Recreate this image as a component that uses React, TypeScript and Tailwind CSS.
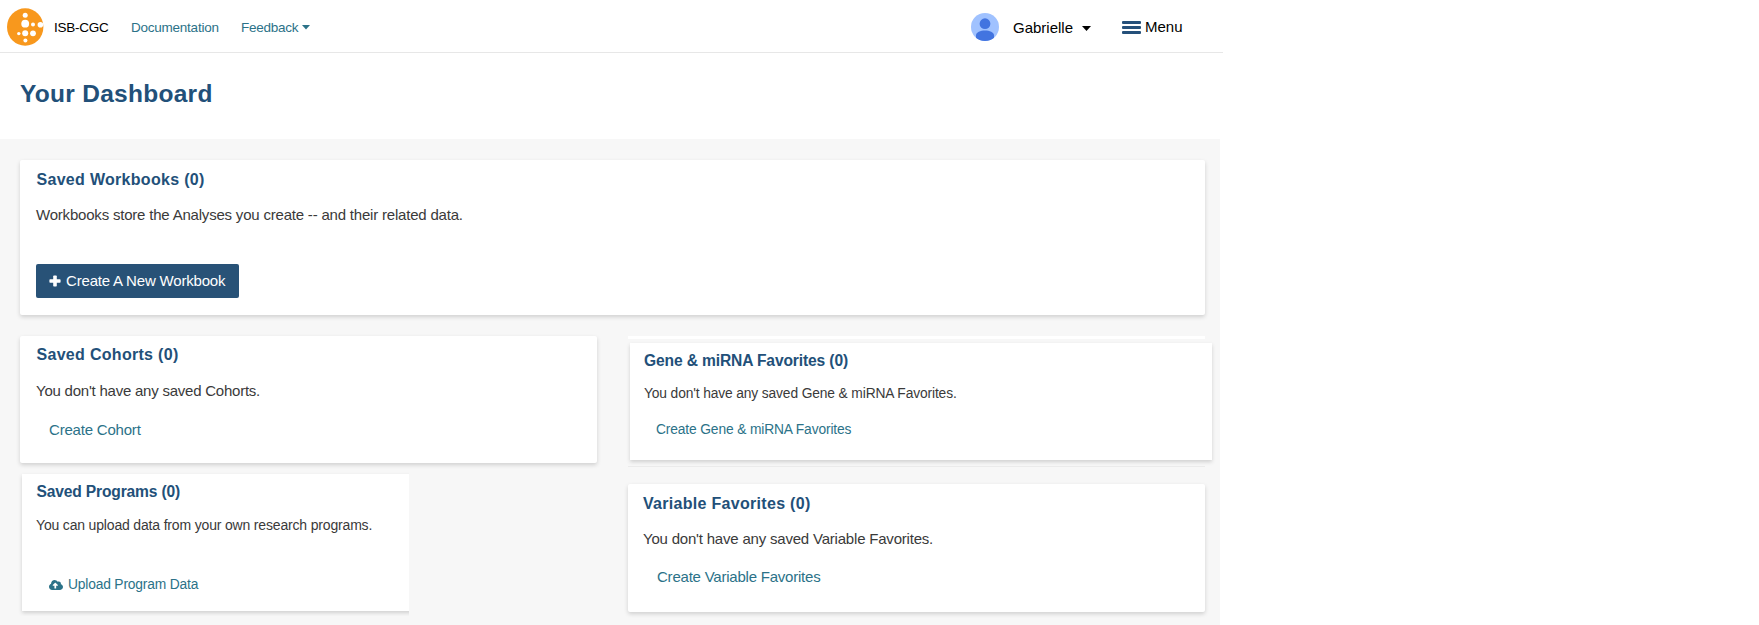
import React from "react";
import { FaCloudUploadAlt } from "react-icons/fa";

function Logo() {
  return (
    <svg className="mt-[2px] ml-[7px] h-[38px] w-[37px] shrink-0" viewBox="0 0 37 38">
      <ellipse cx="18.2" cy="19" rx="18.2" ry="18.8" fill="#f8981d" />
      <g fill="#fff">
        <circle cx="18.2" cy="7.2" r="2.5" />
        <circle cx="18.2" cy="15.7" r="3.9" />
        <circle cx="26" cy="16.5" r="2" />
        <circle cx="33.4" cy="16.7" r="2.8" />
        <circle cx="11.8" cy="25.6" r="1.7" />
        <circle cx="18.2" cy="25.3" r="3" />
        <circle cx="26" cy="25.3" r="2.9" />
        <circle cx="18.4" cy="32.5" r="2" />
      </g>
    </svg>
  );
}

function Avatar() {
  return (
    <svg className="h-7 w-7 shrink-0" viewBox="0 0 28 28">
      <defs>
        <clipPath id="avatar-clip">
          <circle cx="14" cy="14" r="14" />
        </clipPath>
      </defs>
      <g clipPath="url(#avatar-clip)">
        <rect width="28" height="28" fill="#a0c2ff" />
        <circle cx="14" cy="10.7" r="5.4" fill="#4274e0" />
        <path d="M5 22.5c0-3 4.5-4.9 9-4.9s9 1.9 9 4.9V28H5z" fill="#4274e0" />
      </g>
    </svg>
  );
}

function Header() {
  return (
    <header className="flex h-[53px] w-[1223px] items-center border-b border-[#e7e7e7] text-[13.5px] leading-5 tracking-[-0.24px]">
      <Logo />
      <span className="mt-[3px] ml-[10px] w-[77px] text-black">ISB-CGC</span>
      <a className="mt-[3px] w-[110px] text-[#2b7288]">Documentation</a>
      <a className="mt-[3px] flex items-center text-[#2b7288]">
        Feedback
        <svg className="ml-[4px] h-[5px] w-[8px]" viewBox="0 0 8 5">
          <path d="M0 0h8L4 4.5z" fill="currentColor" />
        </svg>
      </a>
      <div className="mt-[2px] ml-auto flex w-[252px] items-center text-[15px] tracking-normal text-black">
        <Avatar />
        <span className="mt-[2px] ml-[14px]">Gabrielle</span>
        <svg className="mt-[2px] ml-[9px] h-[5px] w-[9px]" viewBox="0 0 9 5">
          <path d="M0 0h9L4.5 5z" fill="currentColor" />
        </svg>
        <span className="ml-[31px] flex w-[19px] flex-col gap-[2px]">
          <span className="h-[3px] rounded-[1px] bg-[#25507a]" />
          <span className="h-[3px] rounded-[1px] bg-[#25507a]" />
          <span className="h-[3px] rounded-[1px] bg-[#25507a]" />
        </span>
        <span className="ml-[4px]">Menu</span>
      </div>
    </header>
  );
}

const cardShadow = "bg-white shadow-[0_2px_4px_rgba(0,0,0,0.16)]";

export default function App() {
  return (
    <div className="h-[625px] w-full overflow-hidden bg-white font-['Liberation_Sans',Arial,sans-serif] whitespace-nowrap text-[#3a3a3a]">
      <Header />
      <h1 className="h-[86px] pt-[26px] pl-[20px] text-[24.5px] leading-[30px] font-bold tracking-[0.28px] text-[#225079]">Your Dashboard</h1>
      <main className="h-[486px] w-[1220px] bg-[#f7f7f7] pt-[21px] pl-[20px]">
        <section className={`h-[155px] w-[1185px] rounded-[2px] pt-[10px] pl-4 ${cardShadow}`}>
          <h2 className="pl-[0.5px] text-[16px] leading-5 font-bold tracking-[0.3px] text-[#225079]">Saved Workbooks (0)</h2>
          <p className="mt-[15px] text-[15px] leading-5 tracking-[-0.2px]">Workbooks store the Analyses you create -- and their related data.</p>
          <button className="mt-[39px] flex h-[34px] w-[203px] items-center rounded-[2px] bg-[#285277] pb-px pl-[13px] text-[15px] leading-5 tracking-[-0.18px] text-white">
            <svg className="mr-[5px] size-[12px]" viewBox="0 0 12 12">
              <rect x="4.2" y="0.4" width="3.6" height="11.2" rx="0.8" fill="currentColor" />
              <rect x="0.4" y="4.2" width="11.2" height="3.6" rx="0.8" fill="currentColor" />
            </svg>
            Create A New Workbook
          </button>
        </section>

        <div className="mt-[21px] flex">
          <div className="w-[606px]">
            <section className={`h-[127px] w-[577px] rounded-[2px] pt-[9px] pl-4 ${cardShadow}`}>
              <h2 className="pl-[0.5px] text-[16px] leading-5 font-bold tracking-[0.3px] text-[#225079]">Saved Cohorts (0)</h2>
              <p className="mt-[16px] text-[15px] leading-5 tracking-[-0.23px]">You don't have any saved Cohorts.</p>
              <a className="mt-[19px] ml-[13px] block text-[15px] leading-5 tracking-[-0.2px] text-[#2b7288]">Create Cohort</a>
            </section>
            <div className="-ml-[2px] mt-[3px] h-[150px] w-[391px] overflow-hidden pt-[8px] pl-[4px]">
              <section className={`h-[137px] w-[400px] pt-[8px] pl-[14px] ${cardShadow}`}>
                <h2 className="pl-[0.5px] text-[15.6px] leading-5 font-bold tracking-[-0.16px] text-[#225079]">Saved Programs (0)</h2>
                <p className="mt-[13px] text-[14px] leading-5 tracking-[-0.17px]">You can upload data from your own research programs.</p>
                <a className="mt-[40px] ml-[13px] flex items-center text-[13.8px] leading-5 tracking-[-0.17px] text-[#2b7288]">
                  <FaCloudUploadAlt className="mr-[5px] size-[14px]" />
                  Upload Program Data
                </a>
              </section>
            </div>
          </div>

          <div>
            <div className="ml-[2px] h-[3px] w-[577px] bg-white" />
            <div className="h-[127px] w-[592px] pt-[4px] pl-[4px]">
              <section className={`h-[117px] w-[582px] pt-[8px] pl-[14px] ${cardShadow}`}>
                <h2 className="text-[15.6px] leading-5 font-bold tracking-[-0.13px] text-[#225079]">{"Gene & miRNA Favorites (0)"}</h2>
                <p className="mt-[13px] text-[13.8px] leading-5 tracking-[-0.13px]">{"You don't have any saved Gene & miRNA Favorites."}</p>
                <a className="mt-[16px] ml-[12px] block text-[13.8px] leading-5 tracking-[-0.14px] text-[#2b7288]">{"Create Gene & miRNA Favorites"}</a>
              </section>
            </div>
            <div className="ml-[2px] h-px w-[577px] bg-[#ebebeb]" />
            <section className={`mt-[17px] ml-[2px] h-[128px] w-[577px] rounded-[2px] pt-[10px] pl-[15px] ${cardShadow}`}>
              <h2 className="text-[16px] leading-5 font-bold tracking-[0.3px] text-[#225079]">Variable Favorites (0)</h2>
              <p className="mt-[15px] text-[15px] leading-5 tracking-[-0.2px]">You don't have any saved Variable Favorites.</p>
              <a className="mt-[18px] ml-[14px] block text-[15px] leading-5 tracking-[-0.22px] text-[#2b7288]">Create Variable Favorites</a>
            </section>
          </div>
        </div>
      </main>
    </div>
  );
}
